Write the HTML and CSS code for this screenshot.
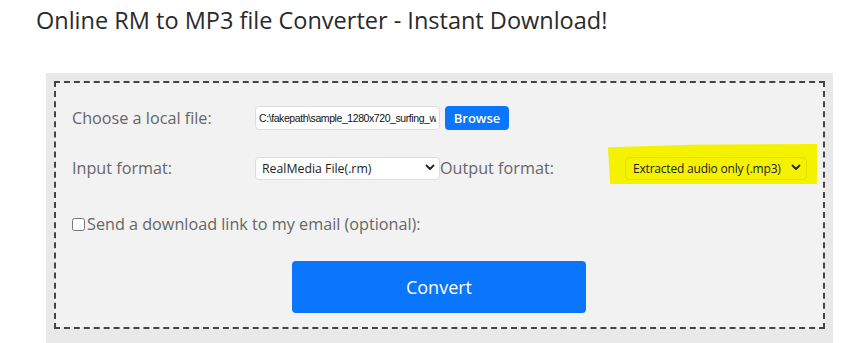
FILE: index.html
```html
<!DOCTYPE html>
<html>
<head>
    <title>Online RM to MP3 file Converter</title>
    <link rel="stylesheet" href="styles.css">
</head>
<body>
    <h1>Online RM to MP3 file Converter - Instant Download!</h1>

    <div class="panel">
        <form class="converter" onsubmit="return false">
            <div class="row row-file">
                <label class="label">Choose a local file:</label>
                <input class="file-path" type="text" readonly value="C:\fakepath\sample_1280x720_surfing_with_audio.rm">
                <button class="browse" type="button">Browse</button>
            </div>
            <div class="row row-format">
                <label class="label">Input format:</label>
                <div class="select-wrap input-select">
                    <select>
                        <option>RealMedia File(.rm)</option>
                    </select>
                    <svg class="chevron" width="10" height="7" viewBox="0 0 10 7"><path d="M1.5 1.5 L5 5 L8.5 1.5" fill="none" stroke="#222" stroke-width="1.8" stroke-linecap="round" stroke-linejoin="round"/></svg>
                </div>
                <label class="label out-label">Output format:</label>
                <div class="highlight">
                    <div class="select-wrap output-select">
                        <select>
                            <option>Extracted audio only (.mp3)</option>
                        </select>
                        <svg class="chevron" width="10" height="7" viewBox="0 0 10 7"><path d="M1.5 1.5 L5 5 L8.5 1.5" fill="none" stroke="#222" stroke-width="1.8" stroke-linecap="round" stroke-linejoin="round"/></svg>
                    </div>
                </div>
            </div>
            <div class="row row-email">
                <label class="check"><input type="checkbox">Send a download link to my email (optional):</label>
            </div>
            <div class="row row-submit">
                <button class="convert" type="submit">Convert</button>
            </div>
        </form>
    </div>
</body>
</html>
```

FILE: styles.css
```css
body {
    margin: 0;
    font-family: "Open Sans", sans-serif;
    color: #222;
    background: #fff;
}
h1 {
    font-weight: 400;
    font-size: 23.5px;
    margin: 4px 0 0 36px;
    line-height: 32px;
    color: #2a2a2a;
}
.panel {
    margin: 37px 0 0 46px;
    width: 771px;
    padding: 8px;
    background: #e9e9e9;
    height: 254px;
    overflow: hidden;
}
.converter {
    border: 2px dashed #444;
    background: #f2f2f2;
    padding: 23px 16px 14px 16px;
}
.row {
    display: flex;
    align-items: center;
}
.label {
    font-size: 16.2px;
    color: #666;
    width: 183px;
    flex-shrink: 0;
}
.file-path {
    box-sizing: border-box;
    width: 185px;
    height: 24px;
    border: 1px solid #ddd;
    border-radius: 4px;
    padding: 0 3px;
    font-family: "Liberation Sans", Arial, sans-serif;
    font-size: 10.5px;
    letter-spacing: -0.42px;
    color: #111;
    background: #fff;
}
.browse {
    margin-left: 5px;
    width: 64px;
    height: 24px;
    border: none;
    border-radius: 4px;
    background: #0a76fd;
    color: #fff;
    font-family: "Open Sans", sans-serif;
    font-size: 13px;
    font-weight: 600;
    padding: 0;
}
.row-format {
    margin-top: 26px;
}
.select-wrap {
    position: relative;
}
.select-wrap select {
    appearance: none;
    -webkit-appearance: none;
    box-sizing: border-box;
    height: 23px;
    border: 1px solid #ddd;
    border-radius: 4px;
    background: #fff;
    font-family: "Open Sans", sans-serif;
    font-size: 12.3px;
    color: #222;
    padding: 0 0 0 6px;
}
.input-select select {
    width: 185px;
}
.chevron {
    position: absolute;
    right: 5px;
    top: 8px;
    pointer-events: none;
}
.out-label {
    width: 168px;
}
.highlight {
    position: relative;
    padding-left: 17px;
}
.highlight::before {
    content: "";
    position: absolute;
    left: 0;
    right: -10px;
    top: -12px;
    bottom: -4px;
    background: #f5f200;
    clip-path: polygon(0 8%, 40% 2%, 100% 0, 100% 100%, 1% 100%);
}
.output-select select {
    position: relative;
    width: 182px;
    background: #f5f200;
    border-color: #e4e000;
    padding-left: 7px;
    font-size: 12px;
    letter-spacing: -0.2px;
}
.output-select .chevron {
    right: 6px;
}
.row-email {
    margin-top: 33px;
}
.check {
    display: flex;
    align-items: center;
    font-size: 16.2px;
    color: #666;
}
.check input {
    margin: 1px 2px 0 0;
    width: 13px;
    height: 13px;
}
.row-submit {
    margin-top: 26px;
}
.convert {
    margin-left: 220px;
    width: 294px;
    height: 52px;
    border: none;
    border-radius: 4px;
    background: #0a76fd;
    color: #fff;
    font-family: "Open Sans", sans-serif;
    font-size: 18px;
}
```
